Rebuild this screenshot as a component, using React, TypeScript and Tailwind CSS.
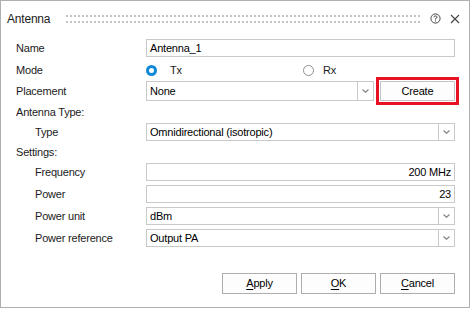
import type { ReactNode } from 'react'

const field = 'h-[18px] border border-[#c9c9c9] bg-white flex items-center px-[3px] text-black'

function Arrow() {
  return (
    <svg width="7" height="4" viewBox="0 0 7 4">
      <path d="M0.5 0.5 L3.5 3.2 L6.5 0.5" fill="none" stroke="#8a8a8a" strokeWidth="1.3" />
    </svg>
  )
}

function Combo({ value, className = '' }: { value: string; className?: string }) {
  return (
    <div className={`flex border border-[#c9c9c9] bg-white ${className}`}>
      <div className="flex-1 flex items-center px-[3px] text-black">{value}</div>
      <div className="w-[16px] border-l border-[#c9c9c9] flex items-center justify-center">
        <Arrow />
      </div>
    </div>
  )
}

function Row({ label, indent, h, children }: { label: string; indent?: boolean; h: string; children?: ReactNode }) {
  return (
    <div className={`flex items-center ${h}`}>
      <div className={`w-[130px] shrink-0 ${indent ? 'pl-[19px]' : ''}`}>{label}</div>
      <div className="flex-1">{children}</div>
    </div>
  )
}

function Btn({ u, rest }: { u: string; rest: string }) {
  return (
    <button className="w-[75px] h-[21px] border border-[#adadad] bg-[#fdfdfd] text-black">
      <span className="underline underline-offset-2">{u}</span>
      {rest}
    </button>
  )
}

export default function App() {
  return (
    <div className="w-[470px] h-[308px] border border-[#b0b0b0] bg-white text-[11px] tracking-[-0.2px] text-[#1b1b1b] font-['Liberation_Sans',Arial,sans-serif] flex flex-col">
      <div className="h-[35px] flex items-center pl-[6px] pr-[9px]">
        <span className="text-[12px] text-[#1b1b1b]">Antenna</span>
        <svg className="ml-[16px]" width="356" height="8">
          <defs>
            <pattern id="grip" width="4" height="6" patternUnits="userSpaceOnUse">
              <rect width="2" height="2" fill="#c4c4c4" />
            </pattern>
          </defs>
          <rect width="356" height="8" fill="url(#grip)" />
        </svg>
        <div className="flex-1" />
        <svg width="11" height="11" viewBox="0 0 11 11">
          <circle cx="5.5" cy="5.5" r="4.6" fill="none" stroke="#444" strokeWidth="1" />
          <path d="M3.9 4.3 Q3.9 2.9 5.5 2.9 Q7.1 2.9 7.1 4.2 Q7.1 5 5.5 5.6 L5.5 6.6" fill="none" stroke="#444" strokeWidth="1" />
          <rect x="5" y="7.4" width="1" height="1" fill="#444" />
        </svg>
        <svg className="ml-[9px]" width="10" height="10" viewBox="0 0 10 10">
          <path d="M1 1 L9 9 M9 1 L1 9" stroke="#444" strokeWidth="1.1" />
        </svg>
      </div>

      <div className="pl-[15px] pr-[14px] mt-[1px]">
        <Row label="Name" h="h-[22px]">
          <div className={field}>Antenna_1</div>
        </Row>
        <Row label="Mode" h="h-[22px]">
          <div className="flex items-center">
            <div className="w-[157px] flex items-center gap-[13px]">
              <span className="w-[11px] h-[11px] rounded-full border-[3px] border-[#0f88d8] bg-white" />
              <span>Tx</span>
            </div>
            <div className="flex items-center gap-[9px]">
              <span className="w-[11px] h-[11px] rounded-full border border-[#8f8f8f] bg-white" />
              <span>Rx</span>
            </div>
          </div>
        </Row>
        <Row label="Placement" h="h-[20px]">
          <div className="flex items-center">
            <Combo value="None" className="w-[228px] h-[20px]" />
            <div className="flex-1" />
            <button className="w-[75px] h-[20px] border border-[#c3c3c3] bg-[#fdfdfd] text-black shadow-[0_0_0_1px_#fff,0_0_0_4px_#e81123]">
              Create
            </button>
          </div>
        </Row>
        <Row label="Antenna Type:" h="h-[22px]" />
        <Row label="Type" indent h="h-[18px]">
          <Combo value="Omnidirectional (isotropic)" className="h-[18px]" />
        </Row>
        <Row label="Settings:" h="h-[22px]" />
        <div className="flex flex-col gap-[4px]">
          <Row label="Frequency" indent h="h-[18px]">
            <div className={`${field} justify-end`}>200 MHz</div>
          </Row>
          <Row label="Power" indent h="h-[18px]">
            <div className={`${field} justify-end`}>23</div>
          </Row>
          <Row label="Power unit" indent h="h-[18px]">
            <Combo value="dBm" className="h-[18px]" />
          </Row>
          <Row label="Power reference" indent h="h-[18px]">
            <Combo value="Output PA" className="h-[18px]" />
          </Row>
        </div>
        <div className="flex justify-end gap-[4px] mt-[26px]">
          <Btn u="A" rest="pply" />
          <Btn u="O" rest="K" />
          <Btn u="C" rest="ancel" />
        </div>
      </div>
    </div>
  )
}
